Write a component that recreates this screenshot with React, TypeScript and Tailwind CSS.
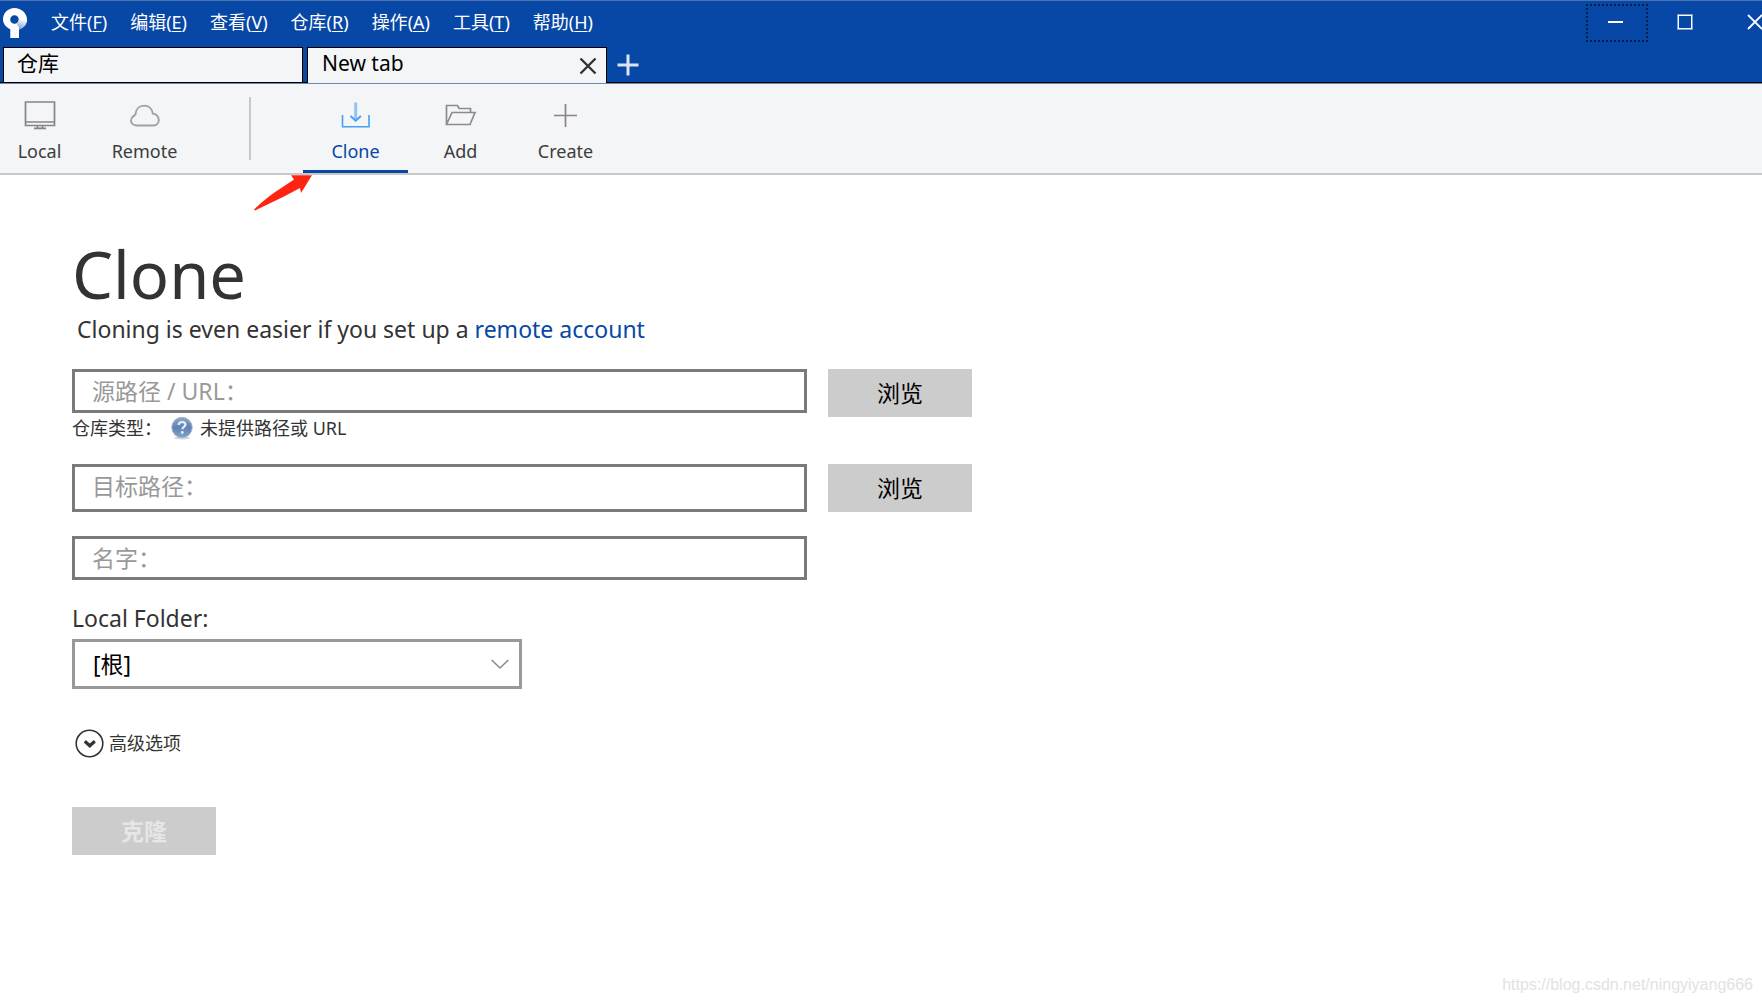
import React from "react";

const MENU = [
    { name: "文件", hotkey: "F" },
    { name: "编辑", hotkey: "E" },
    { name: "查看", hotkey: "V" },
    { name: "仓库", hotkey: "R" },
    { name: "操作", hotkey: "A" },
    { name: "工具", hotkey: "T" },
    { name: "帮助", hotkey: "H" },
];

const LogoIcon = () => (
    <svg width="26" height="32" viewBox="0 0 26 32" aria-hidden="true">
        <defs>
            <linearGradient id="logoShade" gradientUnits="userSpaceOnUse" x1="21" y1="12" x2="18" y2="22">
                <stop offset="0" stopColor="#fff" />
                <stop offset="1" stopColor="#86a3d6" />
            </linearGradient>
        </defs>
        <path
            fillRule="evenodd"
            fill="#fff"
            d="M12.500 1C6 1 1 6 1 12.300c0 4.700 3.200 8.300 7.300 9.900V31h8.700v-8.600c5-1.500 8-5.400 8-10.100C25 6 19 1 12.500 1zm0 7.200a4.300 4.300 0 1 1 0 8.600 4.300 4.300 0 0 1 0-8.600z"
        />
        <path fill="url(#logoShade)" d="M16.800 12.500H25c0 4.700-3 8.400-8 9.900v-2l-2.500-4c1.400-.8 2.300-2.200 2.300-3.900z" />
    </svg>
);

const MonitorIcon = () => (
    <svg width="32" height="30" viewBox="0 0 32 30" fill="none" stroke="#858585" strokeWidth="1.700">
        <path d="M1.500 2h29v23.500h-29zM1.500 22h29M13.500 25.500v2.500M18.500 25.500v2.500M10 28.300h12" />
    </svg>
);

const CloudIcon = () => (
    <svg width="32" height="30" viewBox="0 0 32 30" fill="none" stroke="#a0a0a0" strokeWidth="1.900">
        <path d="M8 25.500h16.500a5.500 5.500 0 0 0 5.300-5.500c0-3.400-2.500-6.400-6-6.400-.8-5-4.300-8-8.600-8-4.700 0-8.200 3.300-8.600 8.200-.2 1.800-4.600 2.400-4.600 6.700 0 3 2.400 5 6 5z" />
    </svg>
);

const DownloadIcon = () => (
    <svg width="32" height="30" viewBox="0 0 32 30" fill="none">
        <path d="M2.500 15v11.700h26.500V15" stroke="#4a9ff5" strokeWidth="1.600" />
        <path d="M15.700 2.500V19" stroke="#90c3f8" strokeWidth="3" />
        <path d="M10.500 16l5.200 4.700 5.200-4.700" stroke="#4a9ff5" strokeWidth="2" />
    </svg>
);

const FolderIcon = () => (
    <svg width="32" height="30" viewBox="0 0 32 30" fill="none" stroke="#8c8c8c" strokeWidth="1.700">
        <path d="M1.500 24.500V5.500h11l1.500 3h11.500v4M1.500 24.500l5.500-12h23L25 24.500z" />
    </svg>
);

const PlusIcon = () => (
    <svg width="32" height="30" viewBox="0 0 32 30" fill="none" stroke="#858585" strokeWidth="1.700">
        <path d="M15.500 4v23M4 15.500h23" />
    </svg>
);

const HelpIcon = () => (
    <svg width="24" height="24" viewBox="0 0 24 24" aria-hidden="true">
        <defs>
            <linearGradient id="helpFill" x1="0" y1="0" x2="0" y2="1">
                <stop offset="0" stopColor="#8fa9ca" />
                <stop offset="0.500" stopColor="#5f82b2" />
                <stop offset="1" stopColor="#7fa3cf" />
            </linearGradient>
        </defs>
        <ellipse cx="12" cy="22" rx="8" ry="1.500" fill="#d5d5d5" />
        <circle cx="12" cy="11.500" r="10.200" fill="url(#helpFill)" stroke="#a9b4c4" />
        <path d="M8.700 9c0-2 1.500-3 3.400-3s3.300 1 3.300 2.700c0 2.200-3 2.300-3 4.600" fill="none" stroke="#e8eef6" strokeWidth="2.200" />
        <circle cx="12.300" cy="16.500" r="1.400" fill="#e8eef6" />
    </svg>
);

type ToolButtonProps = {
    icon: React.ReactNode;
    name: string;
    active?: boolean;
    className?: string;
};

const ToolButton = ({ icon, name, active, className = "w-[105px]" }: ToolButtonProps) => (
    <button
        type="button"
        className={`flex flex-col items-center border-b-[3px] pt-4 text-[18px] leading-6 ${
            active ? "border-[#0747a6] text-[#0747a6]" : "border-transparent text-[#3c3c3c]"
        } ${className}`}
    >
        {icon}
        <span className="mt-[9px]">{name}</span>
    </button>
);

const BrowseButton = () => (
    <button type="button" className="h-12 w-36 shrink-0 bg-[#ccc] text-[23px] leading-8 text-black">
        浏览
    </button>
);

const inputClass =
    "w-full min-w-0 max-w-[735px] border-[3px] border-[#7a7a7a] bg-white px-[17px] text-[23px] text-[#333] outline-none placeholder:text-[#999]";

const TitleBar = () => (
    <header className="border-t border-[#4a72ae] bg-[#0747a6]">
        <div className="flex h-[46px] items-start justify-between overflow-hidden">
            <div className="flex items-start pt-[5px]">
                <div className="w-[51px] pl-[2px] pt-px">
                    <LogoIcon />
                </div>
                <nav className="flex gap-[23px] pt-1 text-[18px] leading-6 text-white">
                    {MENU.map((item) => (
                        <button key={item.hotkey} type="button" className="whitespace-nowrap">
                            {item.name}(<span className="underline underline-offset-2">{item.hotkey}</span>)
                        </button>
                    ))}
                </nav>
            </div>
            <div className="flex pt-[3px]">
                <button
                    type="button"
                    aria-label="最小化"
                    className="flex h-[38px] w-[62px] items-center justify-center border-2 border-dotted border-[#041f4c] pb-[2px] pr-1"
                >
                    <span className="h-[2px] w-[15px] bg-white" />
                </button>
                <button type="button" aria-label="最大化" className="ml-[6px] flex h-9 w-[62px] items-center justify-center">
                    <span className="size-[14px] border border-white ring-1 ring-[#7f9fd2]" />
                </button>
                <button type="button" aria-label="关闭" className="ml-2 flex h-9 w-[38px] items-center overflow-hidden pl-[23px]">
                    <svg className="shrink-0" width="16" height="16" viewBox="0 0 16 16" stroke="#fff" strokeWidth="1.800">
                        <path d="M1 1l14 14M15 1L1 15" />
                    </svg>
                </button>
            </div>
        </div>
        <div className="flex h-9 items-stretch border-b border-black pl-[3px] text-[21px] leading-7 text-black">
            <button type="button" className="mr-1 w-[300px] border border-b-0 border-black bg-[#f4f5f7] pl-[13px] text-left">
                <span className="block h-full pt-px">仓库</span>
            </button>
            <div className="-mb-px flex w-[300px] border border-b-0 border-black bg-[#f4f5f7] pl-[14px]">
                <button type="button" className="flex-1 text-left">
                    <span className="block h-full pt-px">New tab</span>
                </button>
                <button type="button" aria-label="关闭标签" className="flex w-9 items-center justify-center">
                    <svg width="18" height="18" viewBox="0 0 18 18" stroke="#333" strokeWidth="2.400">
                        <path d="M1.500 1.500l15 15M16.500 1.500l-15 15" />
                    </svg>
                </button>
            </div>
            <button type="button" aria-label="新建标签" className="flex w-[42px] items-center justify-center">
                <svg width="22" height="22" viewBox="0 0 22 22" stroke="#dbe5f5" strokeWidth="3">
                    <path d="M11 .5v21M.5 11h21" />
                </svg>
            </button>
        </div>
    </header>
);

const Toolbar = () => (
    <div className="flex h-[92px] border-b-2 border-t border-b-[#c8c8c8] border-t-[#6f87a8] bg-[#f4f5f7]">
        <ToolButton icon={<MonitorIcon />} name="Local" className="w-[79px]" />
        <div className="w-[13px]" />
        <ToolButton icon={<CloudIcon />} name="Remote" />
        <div className="flex w-[106px] justify-center pt-[13px]">
            <div className="h-[63px] w-[2px] bg-[#c8c8c8]" />
        </div>
        <ToolButton icon={<DownloadIcon />} name="Clone" active />
        <ToolButton icon={<FolderIcon />} name="Add" />
        <ToolButton icon={<PlusIcon />} name="Create" />
    </div>
);

const ClonePage = () => (
    <main className="relative flex-1 px-[72px] pb-12 pt-[59px]">
        {/* pointer to the active tool */}
        <svg className="absolute -top-px left-[252px]" width="60" height="38" viewBox="0 0 60 38" aria-hidden="true">
            <path d="M2 35.500Q16 22 30 13.500L42 5.500 39 1.300H60L49 19 48 14 31 23 3 36.500z" fill="#ff2412" />
        </svg>

        <h1 className="text-[65px] leading-[80px] text-[#333]">Clone</h1>
        <p className="pl-[5px] text-[23px] leading-[31px] text-[#333]">
            Cloning is even easier if you set up a{" "}
            <a href="#remote" className="text-[#0747a6]">
                remote account
            </a>
        </p>

        <form className="mt-6">
            <div className="flex h-[47px] items-start gap-[21px]">
                <input type="text" aria-label="源路径 / URL" placeholder="源路径 / URL：" className={`h-11 pb-px ${inputClass}`} />
                <BrowseButton />
            </div>
            <div className="flex h-6 items-center text-[18px] leading-6 text-[#333]">
                <span className="w-[98px]">仓库类型：</span>
                <HelpIcon />
                <span className="pl-[6px]">未提供路径或 URL</span>
            </div>
            <div className="mt-6 flex items-start gap-[21px]">
                <input type="text" aria-label="目标路径" placeholder="目标路径：" className={`h-12 pb-[5px] ${inputClass}`} />
                <BrowseButton />
            </div>
            <input type="text" aria-label="名字" placeholder="名字：" className={`mt-6 block h-11 pb-px ${inputClass}`} />

            <label htmlFor="folder" className="mt-[22px] block text-[23px] leading-8 text-[#333]">
                Local Folder:
            </label>
            <div className="relative mt-[5px] max-w-[450px]">
                <select
                    id="folder"
                    className="block h-[50px] w-full appearance-none border-[3px] border-[#999] bg-white px-[18px] text-[23px] text-black outline-none"
                >
                    <option>[根]</option>
                </select>
                <svg
                    className="pointer-events-none absolute right-[13px] top-5"
                    width="18"
                    height="11"
                    viewBox="0 0 18 11"
                    fill="none"
                    stroke="#888"
                    strokeWidth="1.500"
                >
                    <path d="M.7 1l8.300 8 8.300-8" />
                </svg>
            </div>

            <button type="button" className="mt-[39px] flex h-[30px] items-center pl-[3px] text-[18px] leading-6 text-[#333]">
                <svg width="29" height="29" viewBox="0 0 29 29" fill="none" stroke="#333">
                    <circle cx="14.500" cy="14.500" r="13.300" strokeWidth="1.600" />
                    <path d="M9.800 12.300l5 4.500 5-4.500" strokeWidth="3.200" />
                </svg>
                <span className="pl-[5px]">高级选项</span>
            </button>

            <button type="button" disabled className="mt-[49px] h-12 w-36 bg-[#ccc] text-[23px] font-bold text-[#e6e6e6]">
                克隆
            </button>
        </form>
    </main>
);

const App = () => {
    return (
        <div className="relative flex min-h-screen flex-col overflow-hidden bg-white font-['Noto_Sans','Noto_Sans_CJK_SC',sans-serif]">
            <TitleBar />
            <Toolbar />
            <ClonePage />
            <span className="absolute bottom-2 right-[9px] font-['Liberation_Sans',sans-serif] text-[16px] leading-5 text-[#e2e2e2]">
                https://blog.csdn.net/ningyiyang666
            </span>
        </div>
    );
};

export default App;
